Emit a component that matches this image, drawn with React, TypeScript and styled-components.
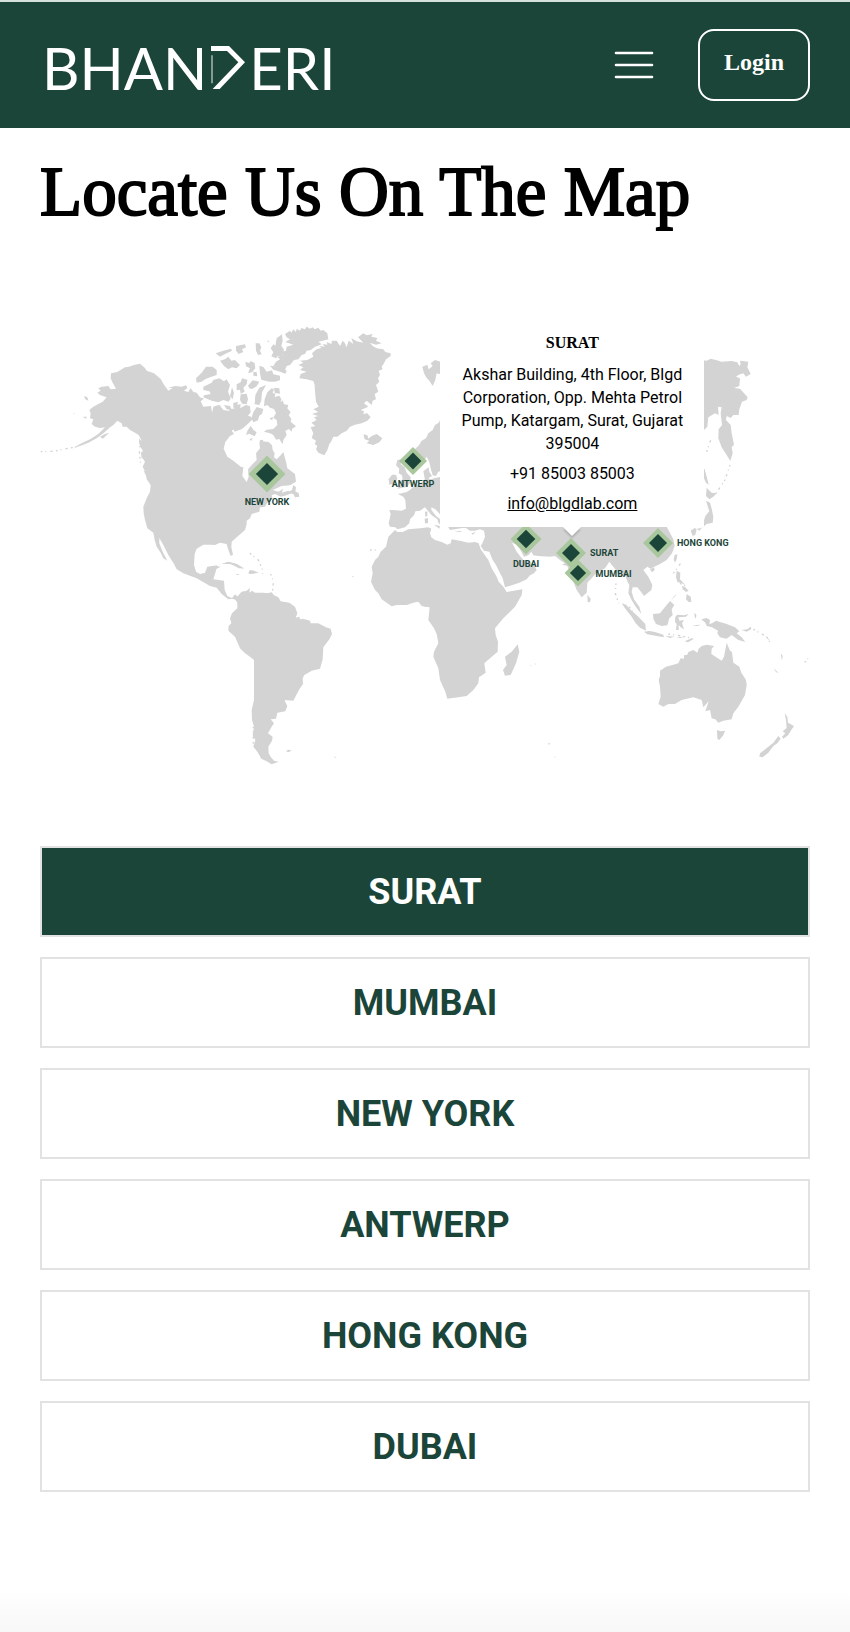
import React, { useState } from "react";
import styled, { createGlobalStyle, css } from "styled-components";

const green = "#1c4539";
const sans = `Roboto, "Noto Sans", sans-serif`;
const serif = `"Liberation Serif", "Times New Roman", serif`;

const GlobalStyle = createGlobalStyle`
  *, *::before, *::after { box-sizing: border-box; }
  body { margin: 0; background: #fff; color: #000; font-family: ${sans}; }
`;

const Page = styled.div`
  display: flex;
  flex-direction: column;
  min-height: 100vh;
`;

const Header = styled.header`
  display: flex;
  align-items: center;
  height: 128px;
  padding: 0 40px;
  border-top: 2px solid #d5dfdc;
  background: ${green};
  color: #fff;
`;

const Brand = styled.a`
  display: flex;
  align-items: center;
  gap: 4px;
  margin-right: auto;
  padding: 6px 0 0 2px;
  color: #fff;
  font-family: Lato, sans-serif;
  font-size: 58px;
  line-height: 64px;
  text-decoration: none;
`;

const BrandMark = styled.svg`
  margin-bottom: 2px;
`;

const MenuButton = styled.button`
  display: flex;
  margin-right: 44px;
  padding: 0;
  border: 0;
  background: none;
  color: inherit;
`;

const LoginButton = styled.button`
  height: 72px;
  padding: 0 24px 6px;
  border: 2px solid #fff;
  border-radius: 16px;
  background: none;
  color: inherit;
  font: bold 24px/32px ${serif};
`;

const Main = styled.main`
  display: flex;
  flex-direction: column;
  padding: 24px 40px 0;
`;

const Title = styled.h1`
  margin: 0;
  font: 400 69px/80px ${serif};
  -webkit-text-stroke: 2px #000;
`;

const MapArea = styled.section`
  position: relative;
  margin-top: 88px;
  aspect-ratio: 77 / 45;
`;

const World = styled.svg`
  display: block;
  width: 100%;
  height: 100%;
`;

const Pin = styled.button<{ $x: number; $y: number }>`
  position: absolute;
  left: ${(p) => (p.$x / 770) * 100}%;
  top: ${(p) => (p.$y / 450) * 100}%;
  display: flex;
  padding: 0;
  border: 0;
  background: none;
  transform: translate(-50%, -50%);
`;

const PinLabel = styled.span<{ $side: "below" | "right" }>`
  position: absolute;
  color: ${green};
  font: 700 9px/12px ${sans};
  white-space: nowrap;
  ${(p) =>
    p.$side === "below"
      ? css`
          top: 100%;
          left: 50%;
          margin-top: 3px;
          transform: translateX(-50%);
        `
      : css`
          left: 100%;
          top: 50%;
          margin-left: 4px;
          transform: translateY(-50%);
        `}
`;

const Popup = styled.address`
  position: absolute;
  left: 52%;
  bottom: 54%;
  width: 264px;
  padding: 10px 12px 12px;
  background: #fff;
  font: 400 16px/23px ${sans};
  text-align: center;

  &::after {
    content: "";
    position: absolute;
    top: 100%;
    left: 50%;
    border: 9px solid transparent;
    border-top-color: #fff;
    filter: drop-shadow(0 2px 1px rgba(0, 0, 0, 0.2));
    transform: translateX(-50%);
  }
`;

const PopupTitle = styled.h2`
  margin: 0 0 8px;
  font: bold 16px/24px ${serif};
`;

const PopupLine = styled.p`
  margin: 0 0 7px;
`;

const PopupLink = styled.a<{ $underlined?: boolean }>`
  color: #000;
  text-decoration: ${(p) => (p.$underlined ? "underline" : "none")};
`;

const CityList = styled.nav`
  display: flex;
  flex-direction: column;
  gap: 20px;
  margin: 76px 0 80px;
`;

const CityButton = styled.button<{ $active: boolean }>`
  height: 91px;
  padding: 0;
  border: 2px solid #e2e2e2;
  background: ${(p) => (p.$active ? green : "#fff")};
  color: ${(p) => (p.$active ? "#fff" : green)};
  font: 700 36px/48px ${sans};
`;

const BottomFade = styled.footer`
  height: 40px;
  margin-top: auto;
  background: linear-gradient(#fff, #f7f7f7);
`;

type City = {
  name: string;
  x: number;
  y: number;
  size: number;
  side: "below" | "right";
};

const pins: City[] = [
  { name: "NEW YORK", x: 227, y: 154, size: 37, side: "below" },
  { name: "ANTWERP", x: 373, y: 141, size: 28, side: "below" },
  { name: "DUBAI", x: 486, y: 219, size: 31, side: "below" },
  { name: "SURAT", x: 531, y: 233, size: 30, side: "right" },
  { name: "MUMBAI", x: 538, y: 253, size: 27, side: "right" },
  { name: "HONG KONG", x: 618, y: 223, size: 30, side: "right" },
];

const cities = ["SURAT", "MUMBAI", "NEW YORK", "ANTWERP", "HONG KONG", "DUBAI"];

/* Land outlines, grouped by region; each region has its own origin. */
const regions: { at: string; land: string[] }[] = [
  {
    at: "-30 -30",
    land: [
      "M243,190L262,186 285,172 297,170 312,165 330,161 345,174 350,182 372,190 392,207 402,224 415,242 428,234 414,234 435,228 455,230 468,226 472,234 462,242 475,246 482,234 490,246 500,248 510,262 522,266 512,274 520,290 543,288 546,308 550,290 568,284 580,300 595,302 610,304 614,318 625,312 612,300 616,286 632,282 630,300 645,308 642,322 660,318 668,328 655,336 640,352 625,350 605,362 612,372 600,378 586,396 581,416 592,440 610,452 632,470 640,472 637,498 650,516 656,500 654,478 668,462 680,450 678,430 690,415 688,398 698,394 716,396 726,406 728,420 734,430 732,442 740,448 752,436 760,426 768,455 772,475 795,492 798,515 780,526 755,528 728,540 745,545 760,536 755,548 775,542 784,550 770,556 752,560 735,552 725,556 728,566 712,578 705,590 690,592 688,605 665,612 660,625 650,632 650,642 645,660 620,682 605,695 604,712 609,734 602,738 595,720 590,702 570,698 555,705 540,704 520,704 500,716 494,732 492,765 498,785 510,792 525,788 532,770 562,766 557,785 550,808 582,812 584,840 592,858 606,864 615,853 625,862 620,870 606,866 595,868 575,852 560,833 540,828 500,805 460,790 440,778 432,762 415,735 400,705 388,684 388,700 398,725 412,752 400,745 392,728 380,710 374,690 370,668 352,655 345,630 341,610 340,590 350,565 360,545 362,525 350,508 348,490 338,470 345,455 335,440 338,420 330,410 334,390 326,375 315,368 300,360 290,350 278,350 275,340 262,332 250,345 240,352 222,368 200,385 175,398 150,408 130,414 150,402 180,388 205,372 225,352 210,354 195,350 185,342 190,328 180,325 182,310 178,300 190,290 205,282 218,275 230,262 210,255 202,248 212,242 205,235 215,230 235,228 242,238 258,236 248,218 242,205Z",
      "M520,230L545,218 550,210 568,205 582,214 590,208 600,225 594,245 602,265 596,275 580,270 565,277 545,272 520,262 522,256 542,252 538,244 520,240Z",
      "M498,205L515,188 528,170 548,170 560,180 560,195 540,202 525,208 515,215 500,218Z",
      "M557,130L580,122 603,116 606,122 585,132 570,140Z",
      "M570,152L585,148 595,140 604,152 615,150 630,165 620,175 606,172 595,178 582,168Z",
      "M618,108L645,103 648,112 636,118 640,126 626,132 618,122Z",
      "M677,100L688,100 694,112 690,122 695,133 684,135 678,122Z",
      "M712,92L718,92 714,98Z",
      "M606,232L612,248 608,268 600,258Z M582,285L600,288 605,300 590,298Z",
      "M770,548L786,540 790,525 798,532 796,544 806,550 808,560 795,562 790,552Z",
      "M340,480L358,494 368,508 372,525 362,516 350,502Z M327,385L334,392 332,412 328,402Z M332,425L342,430 336,448Z M345,455L352,462 350,476Z",
      "M162,258L172,262 175,272 166,268Z M158,320L170,320 168,326Z M210,380L225,372 238,368 218,386Z M130,308L134,310 131,312Z",
      "M540,772L555,768 572,770 560,776 545,780Z M575,762L595,756 620,762 642,777 625,772 600,762Z",
    ],
  },
  {
    at: "540 15",
    land: [
      "M132,244L134,222 142,202 155,190 162,192 158,204 166,206 164,216 178,212 184,222 182,232 188,226 192,238 205,240 202,250 212,262 206,270 214,282 212,290 228,304 216,312 216,320 206,312 196,318 200,330 190,345 188,358 178,342 168,344 160,330 150,325 132,320 140,314 160,312 172,300 170,285 160,278 168,264 162,252 150,248 142,240Z",
      "M104,238L106,210 118,188 138,180 126,202 124,226 118,240Z M162,188L178,190 180,206 164,204Z",
      "M118,122L130,126 140,140 156,136 160,148 180,152 180,166 164,170 148,170 124,164 120,146Z",
      "M150,122L168,124 180,118 200,138 196,146 180,140 160,134Z",
      "M152,70L160,58 166,62 170,40 186,28 188,48 184,62 192,74 186,96 174,92 168,100 154,94 160,82Z",
      "M76,110L88,114 92,108 104,114 106,130 96,142 84,144 90,130 78,124Z M100,140L110,142 112,154 100,152Z",
      "M84,182L98,166 118,170 110,184 96,192 88,190Z",
      "M50,178L62,172 66,160 82,164 80,178 70,188 74,200 62,206 60,194 50,196Z",
      "M62,208L80,206 84,222 80,238 66,236 60,224Z M40,234L54,230 50,246 40,250Z",
      "M28,252L60,250 78,240 90,244 92,262 84,272 96,284 84,296 66,312 44,320 30,290Z",
      "M100,262L110,246 130,252 126,266 118,272 114,286 100,292 94,280Z",
      "M82,318L92,302 100,314 110,322 104,334 88,326 78,330Z M148,280L160,276 156,286Z M120,346L130,344 128,352 118,352Z M88,342L98,340 94,348Z",
    ],
  },
  {
    at: "450 -30",
    land: [
      "M285,72L300,62 304,68 310,58 318,66 320,56 330,62 334,54 345,58 350,50 360,56 368,52 374,58 385,53 392,62 400,60 412,70 415,88 398,92 385,95 395,103 375,110 362,120 350,122 345,132 335,135 325,148 312,150 300,165 290,168 285,180 270,178 262,170 250,168 258,155 270,148 262,140 280,135 272,126 288,122 290,110 310,104 286,96 300,88 290,82Z",
      "M325,165L340,158 330,152 352,150 370,140 366,130 380,118 394,114 388,108 404,110 398,102 412,104 410,96 424,102 426,92 440,92 450,108 458,92 464,98 470,112 476,92 490,102 484,84 500,94 520,98 504,82 520,70 530,76 548,72 544,80 562,84 558,92 575,100 558,104 540,98 548,108 560,115 580,118 586,126 602,130 602,138 588,148 582,160 575,170 578,178 566,182 570,195 564,204 568,215 558,225 565,245 554,252 558,268 548,272 545,285 530,272 522,280 535,290 512,300 522,304 520,312 532,310 542,322 532,332 515,340 495,344 480,350 470,362 455,370 442,380 430,380 424,394 418,402 412,420 403,436 385,428 378,418 382,408 374,402 378,392 365,384 370,370 362,352 376,348 364,338 380,330 372,322 384,318 366,312 385,306 370,298 386,290 378,275 375,245 374,225 370,213 350,208 328,205 332,192 350,185 330,180 340,172Z",
      "M520,373L532,376 535,386 545,378 560,372 577,385 568,397 550,405 530,400 538,392 524,388Z",
    ],
  },
  {
    at: "960 -30",
    land: [
      "M187,170L202,164 206,178 218,168 212,160 225,150 243,156 260,160 260,198 230,190 226,210 218,228 208,212 200,204 192,190Z",
      "M260,310L243,325 236,338 225,345 218,360 205,370 198,385 185,392 178,404 166,416 168,440 178,450 195,448 200,440 208,456 212,475 218,496 228,498 234,486 243,482 270,470Z",
      "M190,484L206,472 208,486 216,498 206,504 210,510 195,510Z",
      "M112,450L126,448 122,462 134,472 140,488 152,502 150,518 142,530 112,536 118,528 126,522 116,518 128,508 126,496 116,490 118,476 108,466Z",
      "M86,508L96,494 108,494 112,506 106,520 88,524Z",
      "M280,480L243,500 225,504 212,508 195,508 186,516 174,524 160,530 150,540 140,546 125,550 114,552 130,560 136,570 138,596 125,602 100,600 88,600 92,612 86,640 90,650 106,652 112,658 135,652 148,640 150,628 162,616 166,604 180,602 195,592 205,604 215,616 232,628 236,640 244,646 244,630 228,618 214,600 214,592 226,598 243,616 270,660 330,650Z",
      "M195,606L202,604 202,618 196,620Z M194,626L204,624 204,640 195,640Z",
    ],
  },
  {
    at: "1500 -30",
    land: [
      "M470,160L485,150 500,152 512,146 528,150 545,155 575,153 592,157 598,168 602,163 600,152 625,155 622,172 632,192 618,200 610,190 596,194 588,200 600,205 598,228 582,234 600,236 623,262 620,270 606,275 598,298 596,315 580,315 572,324 560,318 558,330 572,345 575,370 582,404 575,412 578,430 571,453 560,435 545,412 535,385 536,358 546,345 542,310 545,292 534,290 536,315 525,310 505,322 502,350 492,360 470,360Z",
      "M484,470L494,478 500,500 506,524 498,518 490,500Z",
      "M500,533L515,548 530,550 520,560 508,568 498,558Z",
      "M498,572L510,578 516,600 520,622 518,638 500,642 488,652 470,650 490,638 496,618 508,604Z",
      "M452,662L464,654 470,658 466,674 458,678Z M470,656L486,654 478,662Z",
    ],
  },
  {
    at: "480 720",
    land: [
      "M105,118L125,95 140,92 150,84 148,98 156,92 165,98 190,98 202,100 215,97 222,106 235,112 242,124 268,128 285,140 292,160 286,176 296,180 308,176 330,182 332,190 355,190 378,202 392,206 396,222 388,238 370,262 368,298 360,326 335,332 312,346 308,356 309,372 298,388 280,422 252,420 250,414 262,438 256,454 232,458 228,476 212,478 222,490 214,502 204,520 218,530 216,542 205,560 206,580 212,590 222,602 236,605 215,613 200,604 184,596 172,575 160,560 166,540 158,525 162,500 156,480 155,450 162,420 162,300 150,290 135,280 120,265 105,230 85,212 86,198 94,190 90,175 96,160 112,145 112,128Z",
      "M258,573L266,569 275,572 264,577Z M284,174L298,170 302,182 292,190Z",
      "M65,12L85,5 110,12 132,25 116,25 95,12 80,10Z M145,38L150,30 162,32 176,38 160,41 148,42Z M106,42L120,42 112,45Z M184,40L191,41 186,43Z",
      "M402,588L410,594 405,593Z M456,47L462,50 458,52Z",
    ],
  },
  {
    at: "960 570",
    land: [
      "M105,60L112,66 128,66 145,58 180,55 205,52 214,56 210,70 214,82 225,90 245,96 262,104 272,100 275,88 300,92 325,98 345,96 356,100 362,118 385,150 395,175 410,200 416,215 430,230 440,246 487,238 485,255 465,290 430,325 405,355 407,375 414,395 413,425 390,445 373,460 377,488 357,502 355,520 340,540 320,558 295,562 262,566 256,545 240,510 235,475 220,440 222,425 235,400 230,372 222,355 205,330 209,292 195,290 185,288 175,275 160,278 140,285 110,285 95,289 65,268 55,250 45,240 33,215 38,190 35,170 45,150 55,140 62,125 78,110 85,80Z",
      "M280,20L300,52 318,54 330,62 345,62 360,58 372,62 375,80 368,98 362,108 372,122 388,125 398,150 408,165 418,185 428,205 435,232 455,226 478,218 500,208 510,196 522,190 530,180 522,165 505,152 490,150 482,140 470,125 460,105 456,98 470,104 480,118 492,140 505,136 514,125 520,136 535,138 570,140 585,138 600,150 615,160 606,164 622,168 626,180 640,215 650,240 665,262 680,248 682,218 710,188 735,175 748,155 758,168 768,180 780,202 795,195 803,216 808,225 805,250 816,272 828,292 844,312 838,290 822,268 815,246 818,232 832,232 845,248 852,258 874,240 877,225 865,200 850,180 862,170 872,176 880,172 900,162 920,150 936,130 944,108 940,88 920,50 900,20Z",
      "M473,403L478,425 468,460 452,495 435,497 429,480 440,465 435,440 455,425Z",
      "M682,254L692,266 690,277 683,276Z M334,70L348,66 338,74Z M282,62L306,64 300,67Z M222,44L240,48 238,56Z",
      "M564,699L572,701 566,704Z M582,738L588,743 584,742Z M510,464L514,467 511,468Z M524,460L528,462 525,464Z",
    ],
  },
  {
    at: "1560 540",
    land: [
      "M185,310L198,314 215,332 235,350 256,372 258,392 240,383 226,368 215,350 195,325Z",
      "M252,395L268,393 285,396 310,404 312,412 290,408 262,403Z M316,408L330,409 344,410 330,414Z M350,411L375,410 360,414Z M374,424L395,415 402,416 384,427Z",
      "M279,342L300,340 312,325 330,303 343,315 335,328 338,345 328,355 322,376 305,378 288,372 280,356Z",
      "M346,350L352,344 372,346 386,342 378,350 355,352 358,362 372,360 366,370 372,388 362,382 356,374 356,390 348,390 350,372 345,366Z",
      "M350,212L361,218 360,238 370,248 376,256 366,250 352,246 348,232Z M366,258L376,262 386,272 378,276 368,268Z M380,282L392,290 394,306 386,306 378,298Z M330,305L350,280 346,288Z",
      "M403,338L409,344 408,356 404,350Z M395,376L422,374 412,378Z",
      "M424,358L440,354 450,360 448,372 456,370 468,362 500,372 525,382 538,394 530,400 545,412 556,426 535,420 515,405 500,416 480,412 472,400 474,392 456,382 440,378 436,368Z",
      "M545,390L562,388 572,380 574,387 560,395Z M590,392L606,404 598,398Z M618,408L632,424 622,416Z",
      "M640,503L656,520 648,516Z M731,485L740,483 737,488Z M740,476L748,473 742,478Z M662,460L668,468 666,482Z",
      "M300,512L318,500 335,496 355,490 362,475 372,476 372,466 382,464 385,456 400,450 412,458 416,446 425,438 440,434 462,438 455,446 454,462 485,482 492,470 500,428 510,452 516,456 520,488 538,500 544,518 558,540 560,556 555,585 535,620 520,640 515,658 490,662 475,668 466,658 455,655 450,630 436,634 446,604 430,622 425,600 400,592 365,600 345,612 325,612 310,620 295,612 302,590 300,560 296,540 300,528Z",
      "M471,690L482,694 495,692 490,706 478,720 472,716Z",
      "M674,640L682,650 684,668 702,678 694,690 684,706 670,716 666,710 676,700 668,694 680,684 678,660Z",
      "M655,708L662,716 652,730 640,738 625,758 608,772 598,770 600,760 625,740 640,728Z",
      "M270,208L282,202 284,210 276,217Z M344,165L352,163 350,178 345,188 341,178Z",
    ],
  },
];

const islandChains = [
  "M2,395L40,394 80,386 110,380",
  "M2070,435L2055,480 2028,520",
  "M2000,395L2015,352",
  "M1768,860L1795,900 1808,920",
  "M1728,790L1726,820 1736,850",
  "M1885,942L1925,948 1955,955",
  "M2140,928L2180,950 2192,972",
  "M630,700L655,720 668,750",
  "M692,762L700,785 698,812",
  "M300,365L298,395 303,440",
  "M640,1220L640,1270 665,1310",
  "M990,690L1008,690",
  "M1900,760L1922,730",
  "M1920,790L1940,800",
];

function WorldMap() {
  return (
    <World viewBox="0 0 2310 1350" role="img" aria-label="World map" fill="#d3d3d3">
      {regions.map((region) => (
        <g key={region.at} transform={`translate(${region.at})`}>
          {region.land.map((d) => (
            <path key={d} d={d} />
          ))}
        </g>
      ))}
      <g fill="none" stroke="#d3d3d3" strokeWidth="4" strokeDasharray="5 9 3 12 7 10">
        {islandChains.map((d) => (
          <path key={d} d={d} />
        ))}
      </g>
    </World>
  );
}

function Diamond({ size }: { size: number }) {
  return (
    <svg width={size} height={size} viewBox="0 0 40 40" aria-hidden="true">
      <path d="M20 0L40 20 20 40 0 20Z" fill="#a9c79c" />
      <path d="M20 8L32 20 20 32 8 20Z" fill={green} />
    </svg>
  );
}

export default function App() {
  const [active, setActive] = useState("SURAT");

  return (
    <>
      <GlobalStyle />
      <Page>
        <Header>
          <Brand href="#" aria-label="Bhanderi">
            <span>BHAN</span>
            <BrandMark width="34" height="43" viewBox="0 0 102 129" aria-hidden="true">
              <path d="M0 0H54L102 49 26 129H5L82 49 48 15H0Z" fill="#fff" />
              <path d="M3 28V112" stroke="#b9c8c3" strokeWidth="4" />
            </BrandMark>
            <span>ERI</span>
          </Brand>
          <MenuButton aria-label="Menu">
            <svg width="40" height="28" viewBox="0 0 40 28" aria-hidden="true">
              <path
                d="M2 2H38M2 14H38M2 26H38"
                stroke="#fff"
                strokeWidth="2.6"
                strokeLinecap="round"
              />
            </svg>
          </MenuButton>
          <LoginButton>Login</LoginButton>
        </Header>
        <Main>
          <Title>Locate Us On The Map</Title>
          <MapArea>
            <WorldMap />
            {pins.map((pin) => (
              <Pin key={pin.name} $x={pin.x} $y={pin.y} onClick={() => setActive(pin.name)}>
                <Diamond size={pin.size} />
                <PinLabel $side={pin.side}>{pin.name}</PinLabel>
              </Pin>
            ))}
            <Popup>
              <PopupTitle>SURAT</PopupTitle>
              <PopupLine>
                Akshar Building, 4th Floor, Blgd Corporation, Opp. Mehta Petrol Pump, Katargam,
                Surat, Gujarat 395004
              </PopupLine>
              <PopupLine>
                <PopupLink href="tel:+918500385003">+91 85003 85003</PopupLink>
              </PopupLine>
              <PopupLink $underlined href="mailto:info@blgdlab.com">
                info@blgdlab.com
              </PopupLink>
            </Popup>
          </MapArea>
          <CityList aria-label="Offices">
            {cities.map((city) => (
              <CityButton key={city} $active={city === active} onClick={() => setActive(city)}>
                {city}
              </CityButton>
            ))}
          </CityList>
        </Main>
        <BottomFade />
      </Page>
    </>
  );
}
